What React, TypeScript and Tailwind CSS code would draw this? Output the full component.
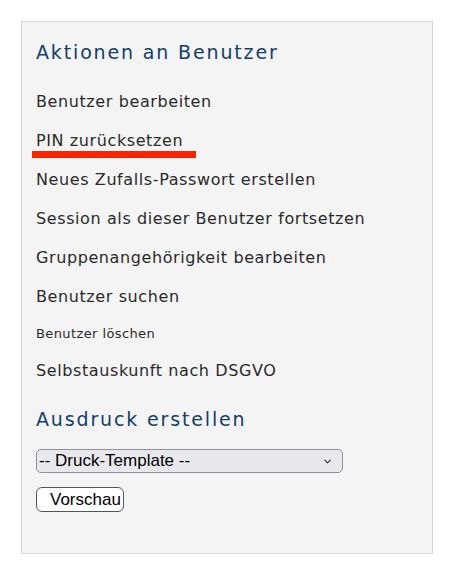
import { ChevronDown } from 'lucide-react';

const actions = [
  { label: 'Benutzer bearbeiten' },
  { label: 'PIN zurücksetzen', marked: true },
  { label: 'Neues Zufalls-Passwort erstellen' },
  { label: 'Session als dieser Benutzer fortsetzen' },
  { label: 'Gruppenangehörigkeit bearbeiten' },
  { label: 'Benutzer suchen' },
  { label: 'Benutzer löschen', small: true },
  { label: 'Selbstauskunft nach DSGVO' },
];

export default function App() {
  return (
    <div className="min-h-screen bg-white pt-[21px] pl-[21px]">
      <div
        className="w-[412px] h-[533px] bg-[#f4f4f4] border border-[#d6d6d6] pt-[18px] pl-[14px]"
        style={{ fontFamily: '"DejaVu Sans", "Noto Sans", sans-serif' }}
      >
        {/* Actions */}
        <h2 className="text-[19px] leading-[24px] tracking-[1.85px] text-[#133f69]">Aktionen an Benutzer</h2>
        <ul className="mt-[18px]">
          {actions.map((a) => (
            <li
              key={a.label}
              className={
                a.small
                  ? 'relative h-[35px] leading-[35px] text-[13px] tracking-[0.4px] text-[#2a2a2a]'
                  : 'relative h-[39px] leading-[39px] text-[16px] tracking-[0.6px] text-[#2a2a2a]'
              }
            >
              {a.label}
              {a.marked && <span className="absolute left-[-4px] top-[30px] w-[164px] h-[7px] bg-[#ff2200]" />}
            </li>
          ))}
        </ul>

        {/* Print */}
        <h2 className="mt-[17px] text-[19px] leading-[24px] tracking-[1.85px] text-[#133f69]">Ausdruck erstellen</h2>
        <div className="relative mt-[18px] w-[307px]">
          <select
            className="appearance-none w-full h-[24px] pl-[2px] bg-[#e9e9ed] border border-[#8f8f9d] rounded-[5px] text-[17px] leading-[20px] text-black"
            style={{ fontFamily: '"Liberation Sans", Arial, sans-serif' }}
          >
            <option>-- Druck-Template --</option>
          </select>
          <ChevronDown className="absolute right-[10px] top-[7px] w-[11px] h-[11px] text-[#333] pointer-events-none" strokeWidth={2.5} />
        </div>
        <button
          className="mt-[14px] h-[25px] pl-[13px] pr-[2px] whitespace-nowrap bg-white border border-[#555] rounded-[6px] text-[17px] leading-[20px] text-black"
          style={{ fontFamily: '"Liberation Sans", Arial, sans-serif' }}
        >
          Vorschau
        </button>
      </div>
    </div>
  );
}
